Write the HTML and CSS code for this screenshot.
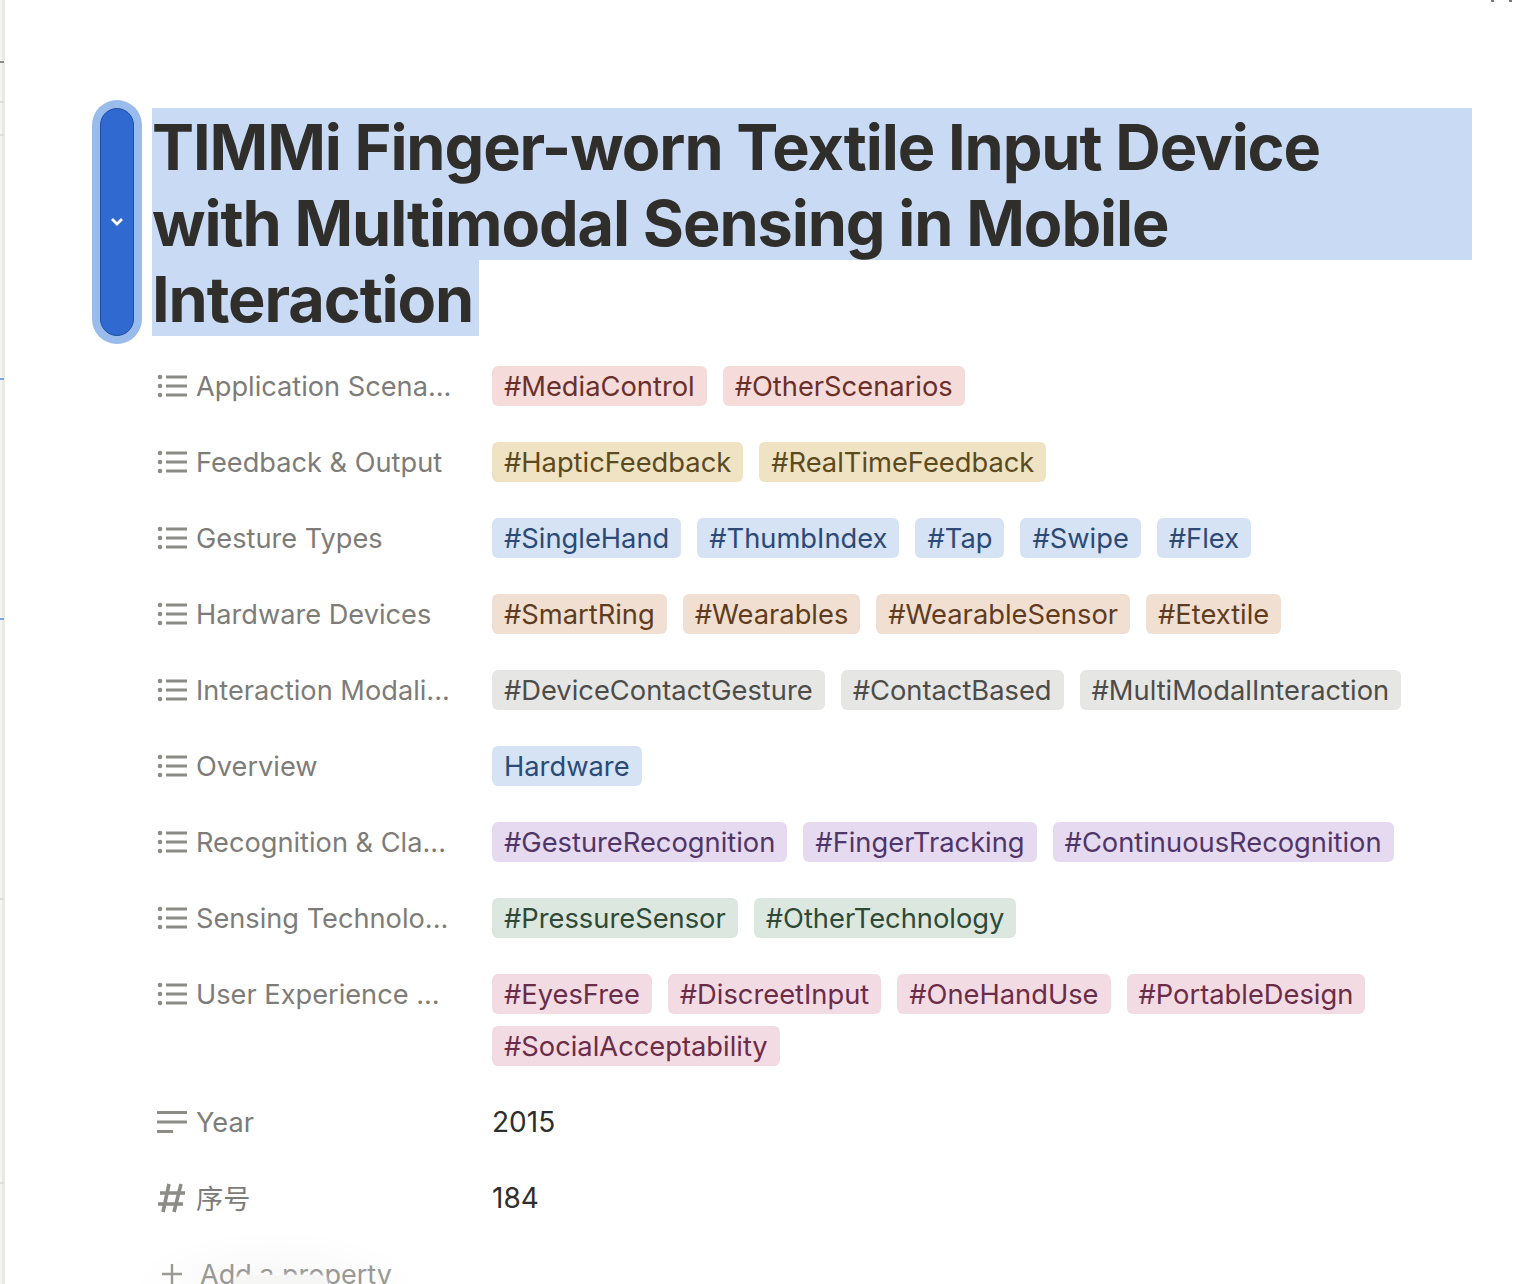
FILE: index.html
```html
<!DOCTYPE html>
<html lang="en">
<head>
    <meta charset="UTF-8">
    <meta name="viewport" content="width=device-width, initial-scale=1.0">
    <title>TIMMi Finger-worn Textile Input Device</title>
    <link rel="stylesheet" href="styles.css">
</head>
<body>

<div class="edge">
    <i class="mark dark" style="top: 61px"></i>
    <i class="mark" style="top: 101px"></i>
    <i class="mark" style="top: 134px"></i>
    <i class="mark blue" style="top: 378px"></i>
    <i class="mark blue" style="top: 618px"></i>
    <i class="mark" style="top: 898px"></i>
    <i class="mark" style="top: 1182px"></i>
</div>
<i class="corner" style="left: 1491px"></i>
<i class="corner" style="left: 1509px"></i>

<div class="page">
    <div class="handle">
        <svg width="14" height="10" viewBox="0 0 14 10"><path d="M2 2l5 5 5-5" fill="none" stroke="#fff" stroke-width="2.8"/></svg>
    </div>

    <h1 class="title">
        <span class="line">TIMMi Finger-worn Textile Input Device</span>
        <span class="line">with Multimodal Sensing in Mobile</span>
        <span class="line last">Interaction</span>
    </h1>

    <div class="props">
        <div class="row">
            <div class="label">
                <svg class="icon" viewBox="0 0 30 24"><use href="#list"/></svg>
                <span>Application Scena...</span>
            </div>
            <div class="tags">
                <span class="tag red">#MediaControl</span>
                <span class="tag red">#OtherScenarios</span>
            </div>
        </div>
        <div class="row">
            <div class="label">
                <svg class="icon" viewBox="0 0 30 24"><use href="#list"/></svg>
                <span>Feedback &amp; Output</span>
            </div>
            <div class="tags">
                <span class="tag yellow">#HapticFeedback</span>
                <span class="tag yellow">#RealTimeFeedback</span>
            </div>
        </div>
        <div class="row">
            <div class="label">
                <svg class="icon" viewBox="0 0 30 24"><use href="#list"/></svg>
                <span>Gesture Types</span>
            </div>
            <div class="tags">
                <span class="tag blue">#SingleHand</span>
                <span class="tag blue">#ThumbIndex</span>
                <span class="tag blue">#Tap</span>
                <span class="tag blue">#Swipe</span>
                <span class="tag blue">#Flex</span>
            </div>
        </div>
        <div class="row">
            <div class="label">
                <svg class="icon" viewBox="0 0 30 24"><use href="#list"/></svg>
                <span>Hardware Devices</span>
            </div>
            <div class="tags">
                <span class="tag brown">#SmartRing</span>
                <span class="tag brown">#Wearables</span>
                <span class="tag brown">#WearableSensor</span>
                <span class="tag brown">#Etextile</span>
            </div>
        </div>
        <div class="row">
            <div class="label">
                <svg class="icon" viewBox="0 0 30 24"><use href="#list"/></svg>
                <span>Interaction Modali...</span>
            </div>
            <div class="tags">
                <span class="tag gray">#DeviceContactGesture</span>
                <span class="tag gray">#ContactBased</span>
                <span class="tag gray">#MultiModalInteraction</span>
            </div>
        </div>
        <div class="row">
            <div class="label">
                <svg class="icon" viewBox="0 0 30 24"><use href="#list"/></svg>
                <span>Overview</span>
            </div>
            <div class="tags">
                <span class="tag blue">Hardware</span>
            </div>
        </div>
        <div class="row">
            <div class="label">
                <svg class="icon" viewBox="0 0 30 24"><use href="#list"/></svg>
                <span>Recognition &amp; Cla...</span>
            </div>
            <div class="tags">
                <span class="tag purple">#GestureRecognition</span>
                <span class="tag purple">#FingerTracking</span>
                <span class="tag purple">#ContinuousRecognition</span>
            </div>
        </div>
        <div class="row">
            <div class="label">
                <svg class="icon" viewBox="0 0 30 24"><use href="#list"/></svg>
                <span>Sensing Technolo...</span>
            </div>
            <div class="tags">
                <span class="tag green">#PressureSensor</span>
                <span class="tag green">#OtherTechnology</span>
            </div>
        </div>
        <div class="row">
            <div class="label">
                <svg class="icon" viewBox="0 0 30 24"><use href="#list"/></svg>
                <span>User Experience ...</span>
            </div>
            <div class="tags">
                <span class="tag pink">#EyesFree</span>
                <span class="tag pink">#DiscreetInput</span>
                <span class="tag pink">#OneHandUse</span>
                <span class="tag pink">#PortableDesign</span>
                <span class="tag pink">#SocialAcceptability</span>
            </div>
        </div>
        <div class="row">
            <div class="label">
                <svg class="icon" viewBox="0 0 30 24"><path d="M0 2.5h30M0 12h30M0 21.5h16" fill="none" stroke="currentColor" stroke-width="3.2"/></svg>
                <span>Year</span>
            </div>
            <div class="value">2015</div>
        </div>
        <div class="row">
            <div class="label">
                <svg class="icon hash" viewBox="0 0 30 30"><path d="M12 1L6 29M24 1L17 29M3 10h25M1 21h25" fill="none" stroke="currentColor" stroke-width="3.6"/></svg>
                <span class="cjk">序号</span>
            </div>
            <div class="value">184</div>
        </div>
    </div>

    <div class="add">
        <svg class="plus" viewBox="0 0 24 24"><path d="M12 2v20M2 12h20" fill="none" stroke="currentColor" stroke-width="2.4"/></svg>
        <span>Add a property</span>
    </div>

    <div class="halo"></div>
    <div class="chip"></div>
</div>

<svg class="defs" width="0" height="0">
    <symbol id="list" viewBox="0 0 30 24">
        <circle cx="3" cy="3" r="2.3" fill="currentColor"/>
        <circle cx="3" cy="12" r="2.3" fill="currentColor"/>
        <circle cx="3" cy="21" r="2.3" fill="currentColor"/>
        <path d="M9 3h21M9 12h21M9 21h21" fill="none" stroke="currentColor" stroke-width="3.2"/>
    </symbol>
</svg>

</body>
</html>
```

FILE: styles.css
```css
html, body {
    margin: 0;
    padding: 0;
    height: 1284px;
    overflow: hidden;
    background-color: #fff;
}

body {
    font-family: Inter, "Noto Sans CJK SC", sans-serif;
    color: #2f2e2b;
}

.edge {
    position: absolute;
    left: 0;
    top: 0;
    bottom: 0;
    width: 2px;
    background-color: #f4f4f3;
    border-right: 3px solid #e8e8e6;
}

.mark {
    position: absolute;
    left: 0;
    width: 4px;
    height: 2px;
    background-color: #deddd9;
}

.mark.dark {
    background-color: #8d8d8b;
}

.mark.blue {
    background-color: #7fa8e0;
}

.corner {
    position: absolute;
    top: 0;
    width: 3px;
    height: 2px;
    background-color: #77777a;
}

.page {
    position: relative;
    height: 1284px;
    box-sizing: border-box;
    overflow: hidden;
    padding: 108px 48px 0 152px;
}

.handle {
    position: absolute;
    left: 100px;
    top: 108px;
    width: 34px;
    height: 228px;
    display: flex;
    align-items: center;
    justify-content: center;
    background-color: #3069cf;
    border: 1px solid #1f4f9f;
    border-radius: 17px;
    box-shadow: 0 0 0 8px #9abcec;
    box-sizing: border-box;
}

.title {
    margin: 0 0 30px;
    font-size: 63px;
    font-weight: 700;
    line-height: 73px;
    letter-spacing: -1.1px;
}

.line {
    display: block;
    padding-top: 3px;
    background-color: #c9daf5;
}

.line.last {
    width: fit-content;
    padding-right: 6px;
}

.props {
    display: flex;
    flex-direction: column;
    gap: 36px;
}

.row {
    display: flex;
}

.label {
    width: 340px;
    flex-shrink: 0;
    height: 40px;
    display: flex;
    align-items: center;
    gap: 9px;
    padding-left: 5px;
    box-sizing: border-box;
    color: #7d7c78;
    font-size: 27.2px;
    white-space: nowrap;
}

.label span {
    padding-top: 1px;
}

.label .cjk {
    padding-top: 0;
    margin-bottom: 3px;
}

.icon {
    width: 30px;
    height: 24px;
    flex-shrink: 0;
    color: #8c8b86;
}

.icon.hash {
    height: 30px;
}

.tags {
    display: flex;
    flex-wrap: wrap;
    gap: 12px 16px;
}

.tag {
    height: 40px;
    padding: 1px 12px 0;
    box-sizing: border-box;
    border-radius: 6px;
    font-size: 27.3px;
    line-height: 39px;
    white-space: nowrap;
}

.red { background-color: #f5dcdb; color: #6b2f2a; }
.yellow { background-color: #efe3c4; color: #5c4a20; }
.blue { background-color: #d5e3f5; color: #2c4a75; }
.brown { background-color: #f1dfd1; color: #5f3c20; }
.gray { background-color: #e6e6e4; color: #4d4c48; }
.purple { background-color: #e6daf0; color: #4f3568; }
.green { background-color: #dce7df; color: #2e4a36; }
.pink { background-color: #f3dbe4; color: #6b2c48; }

.value {
    height: 40px;
    line-height: 41px;
    font-size: 28px;
}

.add {
    display: flex;
    align-items: center;
    gap: 16px;
    margin-top: 36px;
    padding-left: 8px;
    height: 40px;
    color: #9b9a95;
    font-size: 27px;
}

.plus {
    width: 24px;
    height: 24px;
}

.halo {
    position: absolute;
    left: 130px;
    top: 1230px;
    width: 290px;
    height: 54px;
    background: radial-gradient(ellipse 145px 54px at 50% 100%, rgba(0, 0, 0, 0.02) 30%, rgba(0, 0, 0, 0) 100%);
}

.chip {
    position: absolute;
    left: 234px;
    top: 1275px;
    width: 94px;
    height: 9px;
    border-radius: 12px 12px 0 0;
    background-color: #f6f6f5;
    box-shadow: 0 0 4px rgba(255, 255, 255, 0.9);
}

.defs {
    position: absolute;
}
```
